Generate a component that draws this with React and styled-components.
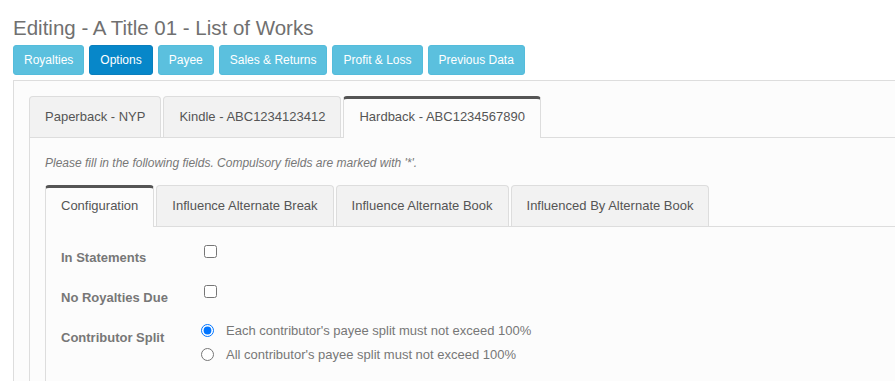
import React from "react";
import styled, { createGlobalStyle } from "styled-components";

const GlobalStyle = createGlobalStyle`
  html, body {
    margin: 0;
    padding: 0;
    background: #ffffff;
    overflow: hidden;
  }
  body {
    font-family: "Liberation Sans", Arial, sans-serif;
    color: #555;
  }
`;

const Page = styled.div`
  padding: 17px 0 0 13px;
`;

const Title = styled.h1`
  margin: 0 0 6px;
  font-size: 20.5px;
  line-height: 22px;
  font-weight: normal;
  color: #707070;
`;

const ButtonBar = styled.div`
  display: flex;
  gap: 5px;
`;

const Button = styled.button`
  font-family: inherit;
  font-size: 12px;
  line-height: 18px;
  padding: 5px 10px;
  border-radius: 3px;
  border: 1px solid ${(p) => (p.active ? "#0a7fbd" : "#54bcdb")};
  background: ${(p) => (p.active ? "#0787c9" : "#5bc0de")};
  color: #fff;
  cursor: pointer;
`;

const Panel = styled.div`
  margin-top: 5px;
  border-top: 1px solid #ddd;
  border-left: 1px solid #ddd;
  background: #fcfcfc;
  padding: 15px 0 0 15px;
`;

const TabList = styled.div`
  display: flex;
  align-items: flex-end;
  gap: 2px;
`;

const Tab = styled.div`
  position: relative;
  z-index: 1;
  font-size: 13px;
  line-height: 20px;
  padding: ${(p) => (p.active ? "8px 15px 11px" : "10px 15px")};
  margin-bottom: ${(p) => (p.active ? "-1px" : "0")};
  border: 1px solid #ddd;
  border-top: ${(p) => (p.active ? "3px solid #555" : "1px solid #ddd")};
  border-bottom: none;
  border-radius: 4px 4px 0 0;
  background: ${(p) => (p.active ? "#fcfcfc" : "#f2f2f2")};
  color: #555;
  white-space: nowrap;
  cursor: pointer;
`;

const TabBody = styled.div`
  border-top: 1px solid #ddd;
  border-left: 1px solid #ddd;
  padding: 15px 0 0 15px;
`;

const Hint = styled.p`
  margin: 0 0 12px;
  font-size: 12px;
  line-height: 20px;
  font-style: italic;
  color: #777;
`;

const FormBody = styled.div`
  border-top: 1px solid #ddd;
  border-left: 1px solid #ddd;
  padding: 10px 0 40px 15px;
`;

const Row = styled.div`
  display: grid;
  grid-template-columns: 139px 1fr;
  align-items: start;
  min-height: 40px;
`;

const Label = styled.div`
  padding-top: 11px;
  font-size: 13px;
  line-height: 20px;
  font-weight: bold;
  color: #777;
`;

const Checkbox = styled.input.attrs({ type: "checkbox" })`
  margin: 8px 0 0 4px;
  width: 13px;
  height: 13px;
`;

const Options = styled.div`
  display: flex;
  flex-direction: column;
  padding-top: 1px;
`;

const Option = styled.label`
  display: flex;
  align-items: center;
  height: 24px;
  font-size: 13px;
  color: #777;
`;

const Radio = styled.input.attrs({ type: "radio" })`
  margin: 0 12px 0 1px;
  width: 13px;
  height: 13px;
`;

const buttons = [
  "Royalties",
  "Options",
  "Payee",
  "Sales & Returns",
  "Profit & Loss",
  "Previous Data",
];

const formats = [
  "Paperback - NYP",
  "Kindle - ABC1234123412",
  "Hardback - ABC1234567890",
];

const sections = [
  "Configuration",
  "Influence Alternate Break",
  "Influence Alternate Book",
  "Influenced By Alternate Book",
];

export default function App() {
  return (
    <>
      <GlobalStyle />
      <Page>
        <Title>Editing - A Title 01 - List of Works</Title>
        <ButtonBar>
          {buttons.map((b) => (
            <Button key={b} active={b === "Options"}>
              {b}
            </Button>
          ))}
        </ButtonBar>
        <Panel>
          <TabList>
            {formats.map((f, i) => (
              <Tab key={f} active={i === 2}>
                {f}
              </Tab>
            ))}
          </TabList>
          <TabBody>
            <Hint>
              Please fill in the following fields. Compulsory fields are marked
              with '*'.
            </Hint>
            <TabList>
              {sections.map((s, i) => (
                <Tab key={s} active={i === 0}>
                  {s}
                </Tab>
              ))}
            </TabList>
            <FormBody>
              <Row>
                <Label>In Statements</Label>
                <div>
                  <Checkbox />
                </div>
              </Row>
              <Row>
                <Label>No Royalties Due</Label>
                <div>
                  <Checkbox />
                </div>
              </Row>
              <Row>
                <Label>Contributor Split</Label>
                <Options>
                  <Option>
                    <Radio name="split" defaultChecked />
                    Each contributor's payee split must not exceed 100%
                  </Option>
                  <Option>
                    <Radio name="split" />
                    All contributor's payee split must not exceed 100%
                  </Option>
                </Options>
              </Row>
            </FormBody>
          </TabBody>
        </Panel>
      </Page>
    </>
  );
}
